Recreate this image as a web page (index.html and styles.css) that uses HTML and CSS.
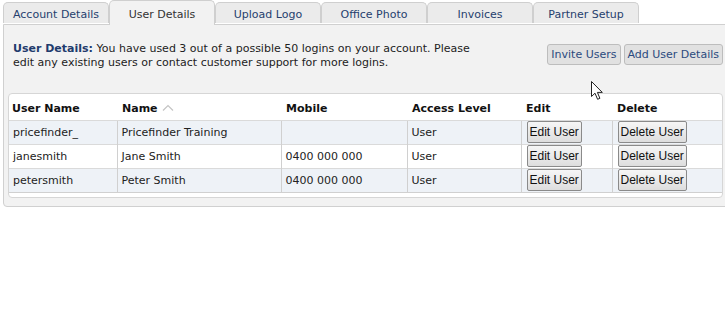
FILE: index.html
```html
<!DOCTYPE html>
<html>
<head>
<meta charset="utf-8">
<link rel="stylesheet" href="styles.css">
</head>
<body>
<div class="page">
  <div class="tabs">
    <div class="tab">Account Details</div>
    <div class="tab active">User Details</div>
    <div class="tab">Upload Logo</div>
    <div class="tab">Office Photo</div>
    <div class="tab">Invoices</div>
    <div class="tab">Partner Setup</div>
  </div>
  <div class="panel">
    <div class="intro">
      <p class="intro-text"><span class="lead">User Details:</span> You have used 3 out of a possible 50 logins on your account. Please edit any existing users or contact customer support for more logins.</p>
      <div class="actions">
        <button class="btn">Invite Users</button>
        <button class="btn">Add User Details</button>
      </div>
    </div>
    <div class="grid-box">
      <table class="grid">
        <colgroup>
          <col class="c1"><col class="c2"><col class="c3"><col class="c4"><col class="c5"><col class="c6">
        </colgroup>
        <thead>
          <tr>
            <th>User Name</th>
            <th>Name <span class="sort"><svg width="12" height="7" viewBox="0 0 12 7"><path d="M1 6.5 L6 1.5 L11 6.5" fill="none" stroke="#c4c4c4" stroke-width="1.2"/></svg></span></th>
            <th>Mobile</th>
            <th>Access Level</th>
            <th>Edit</th>
            <th>Delete</th>
          </tr>
        </thead>
        <tbody>
          <tr class="odd">
            <td>pricefinder_</td><td>Pricefinder Training</td><td></td><td>User</td>
            <td><button class="gbtn">Edit User</button></td><td><button class="gbtn">Delete User</button></td>
          </tr>
          <tr>
            <td>janesmith</td><td>Jane Smith</td><td>0400 000 000</td><td>User</td>
            <td><button class="gbtn">Edit User</button></td><td><button class="gbtn">Delete User</button></td>
          </tr>
          <tr class="odd">
            <td>petersmith</td><td>Peter Smith</td><td>0400 000 000</td><td>User</td>
            <td><button class="gbtn">Edit User</button></td><td><button class="gbtn">Delete User</button></td>
          </tr>
        </tbody>
      </table>
    </div>
  </div>
  <svg class="cursor" width="13" height="20" viewBox="0 0 13 20"><path d="M0.5 0.5 L0.5 15.5 L4 12.2 L6.6 18.3 L8.9 17.3 L6.4 11.4 L11.3 11.4 Z" fill="#fff" stroke="#222" stroke-width="1" stroke-linejoin="miter"/></svg>
</div>
</body>
</html>
```

FILE: styles.css
```css
html, body {
  margin: 0;
  padding: 0;
  background: #fff;
  overflow: hidden;
}
.page {
  position: relative;
  width: 725px;
  height: 335px;
  font-family: "DejaVu Sans", Verdana, sans-serif;
  font-size: 11px;
  color: #222;
}
.tabs {
  display: flex;
  align-items: flex-end;
  height: 24px;
  padding-left: 3px;
  position: relative;
  z-index: 2;
}
.tab {
  box-sizing: border-box;
  width: 106px;
  height: 21px;
  border: 1px solid #cfcfcf;
  border-bottom: none;
  border-radius: 5px 5px 0 0;
  background: #ebebeb;
  color: #263f6e;
  text-align: center;
  line-height: 23px;
  margin-bottom: 1px;
}
.tab.active {
  height: 25px;
  margin-bottom: -1px;
  background: #f2f2f2;
  color: #333;
  line-height: 28px;
}
.panel {
  box-sizing: border-box;
  margin-left: 3px;
  width: 726px;
  height: 183px;
  border: 1px solid #d0d0d0;
  border-radius: 0 0 4px 4px;
  background: #f2f2f2;
  padding: 0 0 0 4px;
  position: relative;
  z-index: 1;
}
.intro {
  display: flex;
  justify-content: space-between;
  align-items: flex-start;
  padding: 17px 5px 0 5px;
  height: 68px;
  box-sizing: border-box;
}
.intro-text {
  margin: 0;
  width: 470px;
  line-height: 14px;
  color: #222;
}
.intro-text .lead {
  font-weight: bold;
  color: #1f3b6d;
}
.actions {
  display: flex;
  gap: 3px;
  padding-top: 2px;
}
.btn {
  font-family: "DejaVu Sans", Verdana, sans-serif;
  font-size: 11px;
  color: #2b4a7e;
  background: #e1e1e1;
  border: 1px solid #bdbdbd;
  border-radius: 3px;
  height: 21px;
  padding: 0 3px;
  margin: 0;
}
.grid-box {
  box-sizing: border-box;
  width: 715px;
  height: 105px;
  background: #fff;
  border: 1px solid #d6d6d6;
  border-radius: 4px;
}
.grid {
  border-collapse: collapse;
  table-layout: fixed;
  width: 713px;
}
.c1 { width: 108px; }
.c2 { width: 164px; }
.c3 { width: 126px; }
.c4 { width: 114px; }
.c5 { width: 91px; }
.c6 { width: 110px; }
.grid th {
  text-align: left;
  font-weight: bold;
  color: #111;
  height: 26px;
  padding: 3px 0 0 5px;
  box-sizing: border-box;
  white-space: nowrap;
}
.grid th:first-child {
  padding-left: 3px;
}
.sort svg {
  vertical-align: 1px;
  margin-left: 1px;
}
.grid td {
  height: 24px;
  box-sizing: border-box;
  padding: 0 0 0 4px;
  border-top: 1px solid #dadada;
  border-left: 1px solid #d0d0d0;
  color: #222;
  white-space: nowrap;
}
.grid tbody tr:last-child td {
  border-bottom: 1px solid #d0d0d0;
}
.grid td:first-child {
  border-left: none;
  padding-left: 4px;
}
.grid tr.odd td {
  background: #eef2f7;
}
.gbtn {
  font-family: "Liberation Sans", Arial, sans-serif;
  font-size: 12px;
  color: #111;
  height: 22px;
  padding: 0 2px;
  margin: 0 0 0 1px;
  border: 1px solid #8a8a8a;
  border-radius: 2px;
  background: linear-gradient(#f6f6f6, #dddddd);
  vertical-align: middle;
}
.cursor {
  position: absolute;
  left: 591px;
  top: 81px;
  z-index: 5;
}
```
